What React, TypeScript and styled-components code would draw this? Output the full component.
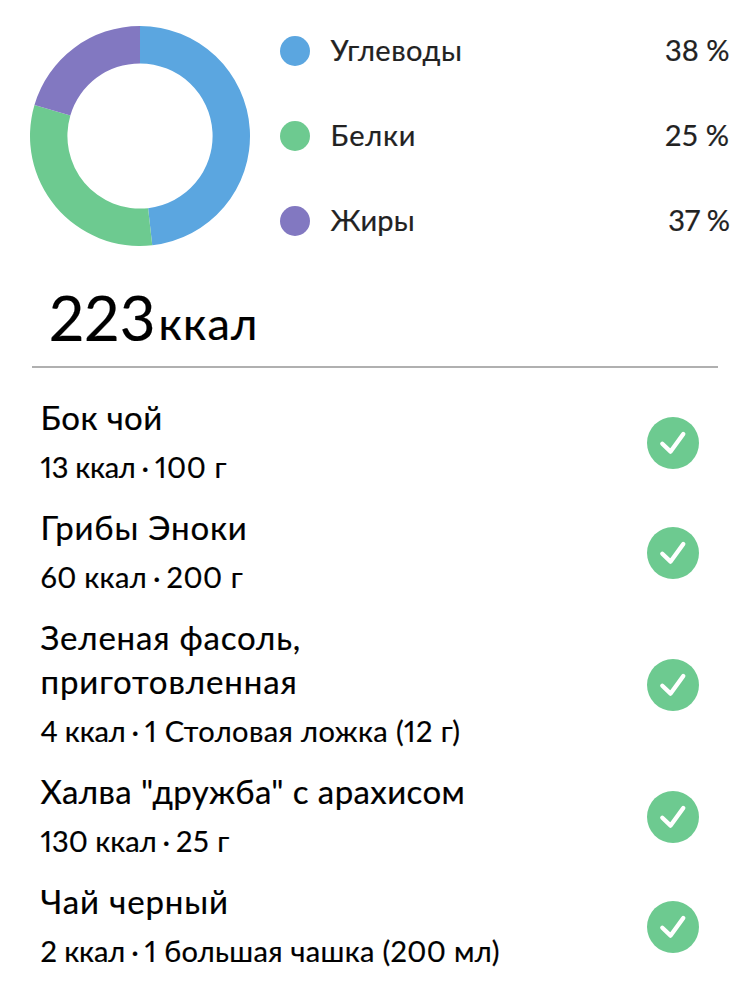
import React from 'react';
import styled, { createGlobalStyle } from 'styled-components';

const GlobalStyle = createGlobalStyle`
  * { box-sizing: border-box; }
  body {
    margin: 0;
    background: #fff;
    color: #000;
    font-family: Lato, "Liberation Sans", sans-serif;
    font-variant-numeric: proportional-nums;
    -webkit-text-stroke: 0.2px;
  }
`;

const Page = styled.main`
  width: 750px;
  height: 990px;
  overflow: hidden;
  background: #fff;
`;

const Summary = styled.section`
  display: flex;
  height: 280px;
  padding: 26px 20.5px 0 30px;
`;

const Donut = styled.svg`
  flex: none;
  width: 220px;
  height: 220px;
`;

const Legend = styled.ul`
  display: flex;
  flex: 1;
  flex-direction: column;
  gap: 55px;
  margin: 0;
  padding: 10px 0 0 30px;
  list-style: none;
`;

const LegendRow = styled.li`
  display: flex;
  align-items: center;
  height: 30px;
  color: #222;
  font-size: 29px;
`;

const Swatch = styled.span<{ $color: string }>`
  width: 30px;
  height: 30px;
  margin-right: 20.5px;
  border-radius: 50%;
  background: ${(p) => p.$color};
`;

const Tracked = styled.span<{ $spacing: number }>`
  letter-spacing: ${(p) => p.$spacing}px;
  white-space: nowrap;
`;

const LegendName = styled(Tracked)`
  flex: 1;
  padding-bottom: 4px;
`;

const LegendValue = styled(Tracked)`
  padding-bottom: 4px;
`;

const Total = styled.section`
  display: flex;
  align-items: baseline;
  height: 86px;
  margin-left: 49px;
  line-height: 74px;
`;

const TotalValue = styled.span`
  width: 109.5px;
  font-size: 62px;
  letter-spacing: 0.2px;
`;

const TotalUnit = styled.span`
  position: relative;
  top: -1px;
  font-size: 45px;
  letter-spacing: 1.2px;
`;

const Divider = styled.hr`
  width: 686px;
  height: 2px;
  margin: 0 32px;
  border: 0;
  background: #b0b0b0;
`;

const FoodList = styled.ul`
  margin: 20px 0 0;
  padding: 0;
  list-style: none;
`;

const FoodRow = styled.li`
  display: flex;
  align-items: center;
  justify-content: space-between;
  padding: 0 51px 0 40.5px;
`;

const FoodText = styled.div`
  padding: 7px 0 9px;
  line-height: 44px;
`;

const FoodName = styled.div`
  display: flex;
  flex-direction: column;
  font-size: 33px;
`;

const FoodDetails = styled.div`
  display: flex;
  margin-top: 6px;
  font-size: 29px;
`;

const Dot = styled.span`
  width: 19.5px;
  text-align: center;
`;

const CheckIcon = styled.svg`
  flex: none;
  width: 52px;
  height: 52px;
`;

type Text = [text: string, spacing: number];

const COLORS = { carbs: '#5ba6e0', protein: '#6dca90', fat: '#8278c1' };

const nutrients: { color: string; name: Text; value: Text }[] = [
  { color: COLORS.carbs, name: ['Углеводы', 0.5], value: ['38 %', 0] },
  { color: COLORS.protein, name: ['Белки', 0.75], value: ['25 %', 0.4] },
  { color: COLORS.fat, name: ['Жиры', 0.15], value: ['37 %', -0.4] },
];

const foods: { name: Text[]; kcal: Text; portion: Text }[] = [
  { name: [['Бок чой', 0.4]], kcal: ['13 ккал', -0.3], portion: ['100 г', 0.6] },
  { name: [['Грибы Эноки', 0.8]], kcal: ['60 ккал', 0.3], portion: ['200 г', 0.6] },
  {
    name: [['Зеленая фасоль,', 0.8], ['приготовленная', 0.9]],
    kcal: ['4 ккал', -0.2],
    portion: ['1 Столовая ложка (12 г)', 0.4],
  },
  { name: [['Халва "дружба" с арахисом', 0.4]], kcal: ['130 ккал', 0], portion: ['25 г', 0.5] },
  { name: [['Чай черный', 0.9]], kcal: ['2 ккал', -0.1], portion: ['1 большая чашка (200 мл)', 0.32] },
];

const slices = [
  { color: COLORS.carbs, from: 0, to: 173.6 },
  { color: COLORS.protein, from: 173.6, to: 286.4 },
  { color: COLORS.fat, from: 286.4, to: 360 },
];

function ringSlice(from: number, to: number) {
  const at = (r: number, deg: number) => {
    const a = (deg * Math.PI) / 180;
    return `${110 + r * Math.sin(a)} ${110 - r * Math.cos(a)}`;
  };
  return `M${at(110, from)}A110 110 0 0 1 ${at(110, to)}L${at(72.6, to)}A72.6 72.6 0 0 0 ${at(72.6, from)}Z`;
}

export default function App() {
  return (
    <Page>
      <GlobalStyle />
      <Summary>
        <Donut viewBox="0 0 220 220">
          {slices.map((s) => (
            <path key={s.color} d={ringSlice(s.from, s.to)} fill={s.color} />
          ))}
        </Donut>
        <Legend>
          {nutrients.map(({ color, name, value }) => (
            <LegendRow key={color}>
              <Swatch $color={color} />
              <LegendName $spacing={name[1]}>{name[0]}</LegendName>
              <LegendValue $spacing={value[1]}>{value[0]}</LegendValue>
            </LegendRow>
          ))}
        </Legend>
      </Summary>
      <Total>
        <TotalValue>223</TotalValue>
        <TotalUnit>ккал</TotalUnit>
      </Total>
      <Divider />
      <FoodList>
        {foods.map(({ name, kcal, portion }) => (
          <FoodRow key={name[0][0]}>
            <FoodText>
              <FoodName>
                {name.map(([text, spacing]) => (
                  <Tracked key={text} $spacing={spacing}>{text}</Tracked>
                ))}
              </FoodName>
              <FoodDetails>
                <Tracked $spacing={kcal[1]}>{kcal[0]}</Tracked>
                <Dot>·</Dot>
                <Tracked $spacing={portion[1]}>{portion[0]}</Tracked>
              </FoodDetails>
            </FoodText>
            <CheckIcon viewBox="0 0 52 52">
              <circle cx="26" cy="26" r="26" fill={COLORS.protein} />
              <path
                d="M15.3 26.7 L23.6 34.6 L36.3 16.9"
                fill="none"
                stroke="#fff"
                strokeWidth="4.3"
                strokeLinecap="round"
                strokeLinejoin="round"
              />
            </CheckIcon>
          </FoodRow>
        ))}
      </FoodList>
    </Page>
  );
}
